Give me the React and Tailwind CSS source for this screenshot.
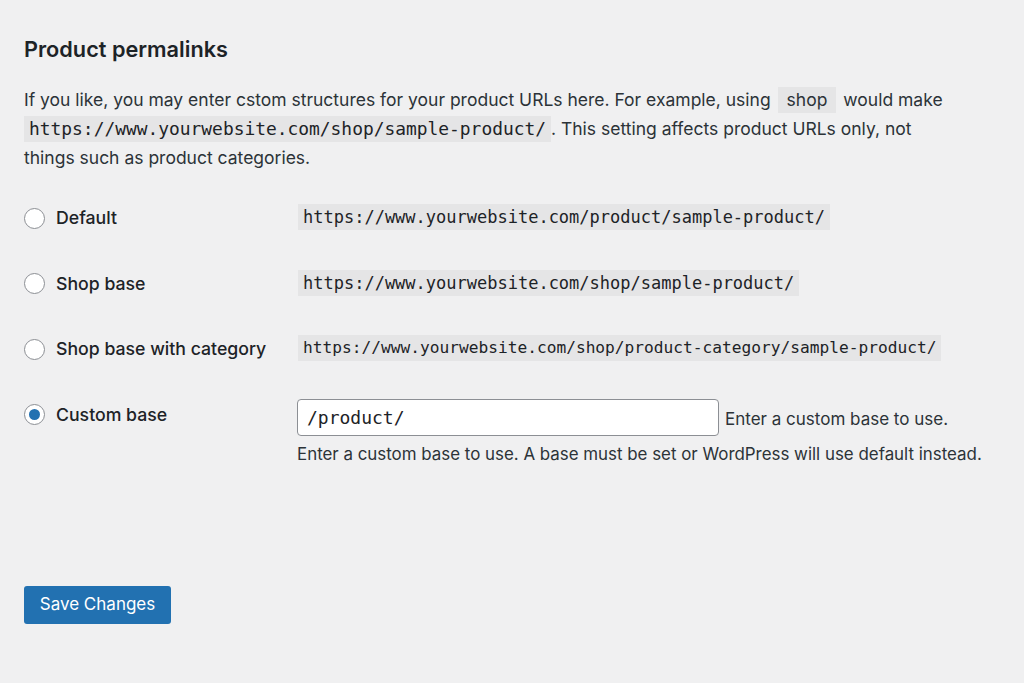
import React from "react";

const sans = { fontFamily: "Inter, 'Liberation Sans', Arial, sans-serif" };

function Radio({ checked }) {
  return (
    <span className="flex h-[21px] w-[21px] shrink-0 items-center justify-center rounded-full border border-[#8c8f94] bg-white">
      {checked && <span className="h-[11px] w-[11px] rounded-full bg-[#2271b1]" />}
    </span>
  );
}

function Row({ label, checked, children }) {
  return (
    <div className="flex items-start">
      <div className="flex w-[274px] shrink-0 items-center gap-[11px] pt-[1px]">
        <Radio checked={checked} />
        <span className="text-[17.7px] font-medium text-[#1d2327]">{label}</span>
      </div>
      <div className="flex-1">{children}</div>
    </div>
  );
}

function Code({ children, size = "text-[17px]" }) {
  return (
    <code
      className={`inline-block bg-[#e5e5e6] px-[5px] py-[1px] leading-[24px] text-[#1d2327] ${size}`}
      style={{ fontFamily: "'DejaVu Sans Mono', 'Liberation Mono', monospace" }}
    >
      {children}
    </code>
  );
}

export default function App() {
  return (
    <div className="min-h-[683px] w-full bg-[#f0f0f1] px-6 pt-[35px] text-[#1d2327]" style={sans}>
      <h2 className="text-[21.7px] font-semibold leading-[28px]">Product permalinks</h2>
      <p className="mt-[22px] max-w-[940px] text-[17.5px] leading-[29px] text-[#2c3338]">
        If you like, you may enter cstom structures for your product URLs here. For example, using{" "}
        <span className="mx-[2px] inline-block bg-[#e5e5e6] px-[9px] leading-[26px]">shop</span> would make{" "}
        <Code size="text-[17.9px]">https://www.yourwebsite.com/shop/sample-product/</Code>. This setting affects product URLs only, not
        <br />
        things such as product categories.
      </p>

      <div className="mt-[32px] flex flex-col gap-[38px]">
        <Row label="Default">
          <Code>https://www.yourwebsite.com/product/sample-product/</Code>
        </Row>
        <Row label="Shop base">
          <Code>https://www.yourwebsite.com/shop/sample-product/</Code>
        </Row>
        <Row label="Shop base with category">
          <Code size="text-[16.2px]">https://www.yourwebsite.com/shop/product-category/sample-product/</Code>
        </Row>
        <div className="-mt-[2px] flex items-start">
          <div className="flex w-[273px] shrink-0 items-center gap-[11px] pt-[3px]">
            <Radio checked />
            <span className="text-[17.7px] font-medium text-[#1d2327]">Custom base</span>
          </div>
          <div className="flex-1">
            <div className="flex items-end gap-[6px]">
              <div
                className="flex h-[37px] w-[422px] items-center rounded-[4px] border border-[#8c8f94] bg-white px-[9px] text-[18px] text-[#1d2327]"
                style={{ fontFamily: "'DejaVu Sans Mono', 'Liberation Mono', monospace" }}
              >
                /product/
              </div>
              <span className="pb-[3px] text-[17px] text-[#2c3338]">Enter a custom base to use.</span>
            </div>
            <p className="mt-[6px] text-[16.9px] text-[#2c3338]">
              Enter a custom base to use. A base must be set or WordPress will use default instead.
            </p>
          </div>
        </div>
      </div>

      <button className="mt-[119px] h-[38px] w-[147px] rounded-[3px] bg-[#2271b1] text-[17px] text-white">
        Save Changes
      </button>
    </div>
  );
}
